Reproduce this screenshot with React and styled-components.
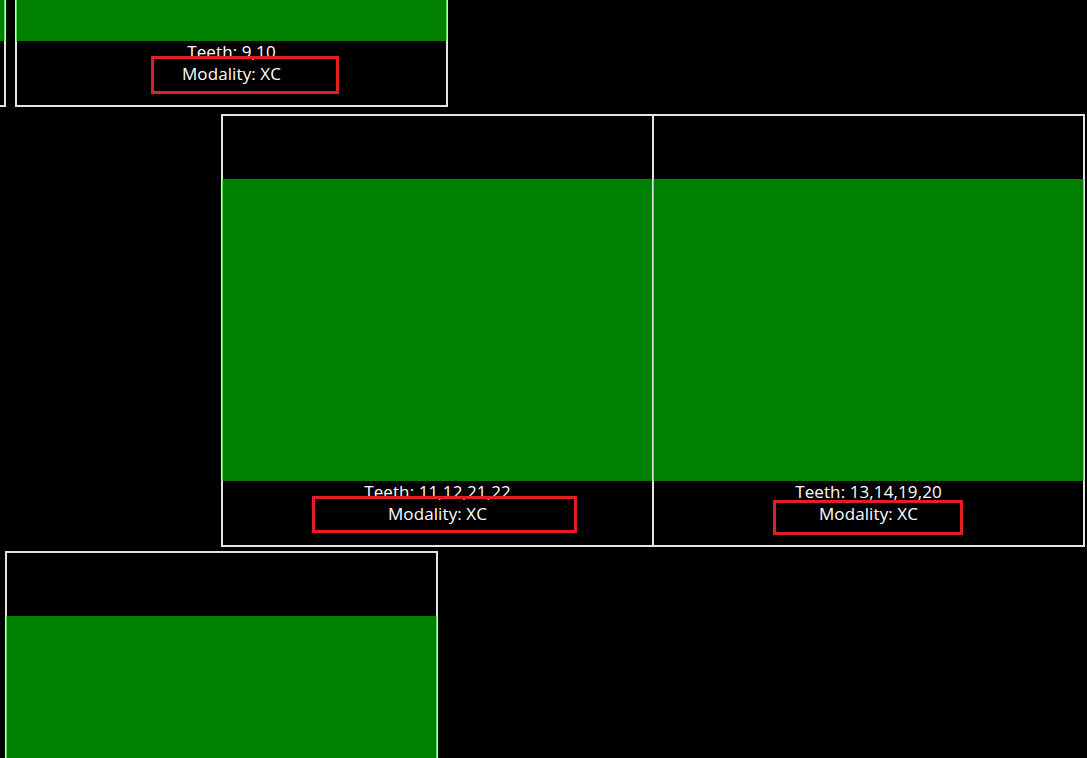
import React from 'react';
import styled, { createGlobalStyle } from 'styled-components';

const GlobalStyle = createGlobalStyle`
  html, body {
    margin: 0;
    padding: 0;
    background: #000;
    overflow: hidden;
  }
  body {
    font-family: "Open Sans", "Noto Sans", sans-serif;
  }
`;

const Viewport = styled.div`
  width: 1087px;
  height: 758px;
  overflow: hidden;
  background: #000;
`;

const Row = styled.div`
  display: flex;
  gap: ${(p) => p.gap || 0}px;
  margin-top: ${(p) => p.top}px;
  margin-left: ${(p) => p.left}px;
`;

const Card = styled.div`
  position: relative;
  flex: 0 0 auto;
  width: 433px;
  height: 433px;
  box-sizing: border-box;
  border: 2px solid #e4e4e4;
  display: flex;
  flex-direction: column;
  background: #000;
  margin-left: ${(p) => (p.joined ? '-2px' : '0')};
`;

const Header = styled.div`
  height: 63px;
`;

const Preview = styled.div`
  height: 302px;
  margin: 0 -1px;
  background: #008000;
  border-left: 1px solid #5fe05f;
  border-right: 1px solid #5fe05f;
`;

const Footer = styled.div`
  position: relative;
  flex: 1;
  display: flex;
  flex-direction: column;
  align-items: center;
  padding-top: 0;
  color: #fff;
  font-size: 17px;
  line-height: 22px;
`;

const Label = styled.div`
  white-space: nowrap;
  letter-spacing: 0.1px;
`;

const Highlight = styled.div`
  position: absolute;
  box-sizing: border-box;
  border: 3px solid #e31e24;
`;

const cards = [
  [
    { id: 'a', teeth: '6,7,8' },
    { id: 'b', teeth: '9,10', box: { left: 134, top: 15, width: 188, height: 38 } },
  ],
  [
    { id: 'c', teeth: '11,12,21,22', box: { left: 89, top: 15, width: 265, height: 37 } },
    { id: 'd', teeth: '13,14,19,20', box: { left: 119, top: 19, width: 190, height: 35 } },
  ],
  [{ id: 'e', teeth: '27,28' }],
];

const rows = [
  { top: -326, left: -427, gap: 9 },
  { top: 7, left: 221, gap: 0 },
  { top: 4, left: 5, gap: 0 },
];

const ImageCard = ({ item, joined }) => (
  <Card joined={joined}>
    <Header />
    <Preview />
    <Footer>
      <Label>Teeth: {item.teeth}</Label>
      <Label>Modality: XC</Label>
      {item.box && (
        <Highlight
          style={{
            left: item.box.left,
            top: item.box.top,
            width: item.box.width,
            height: item.box.height,
          }}
        />
      )}
    </Footer>
  </Card>
);

export default function App() {
  return (
    <Viewport>
      <GlobalStyle />
      {rows.map((row, i) => (
        <Row key={i} top={row.top} left={row.left} gap={row.gap}>
          {cards[i].map((item, j) => (
            <ImageCard key={item.id} item={item} joined={i === 1 && j > 0} />
          ))}
        </Row>
      ))}
    </Viewport>
  );
}
